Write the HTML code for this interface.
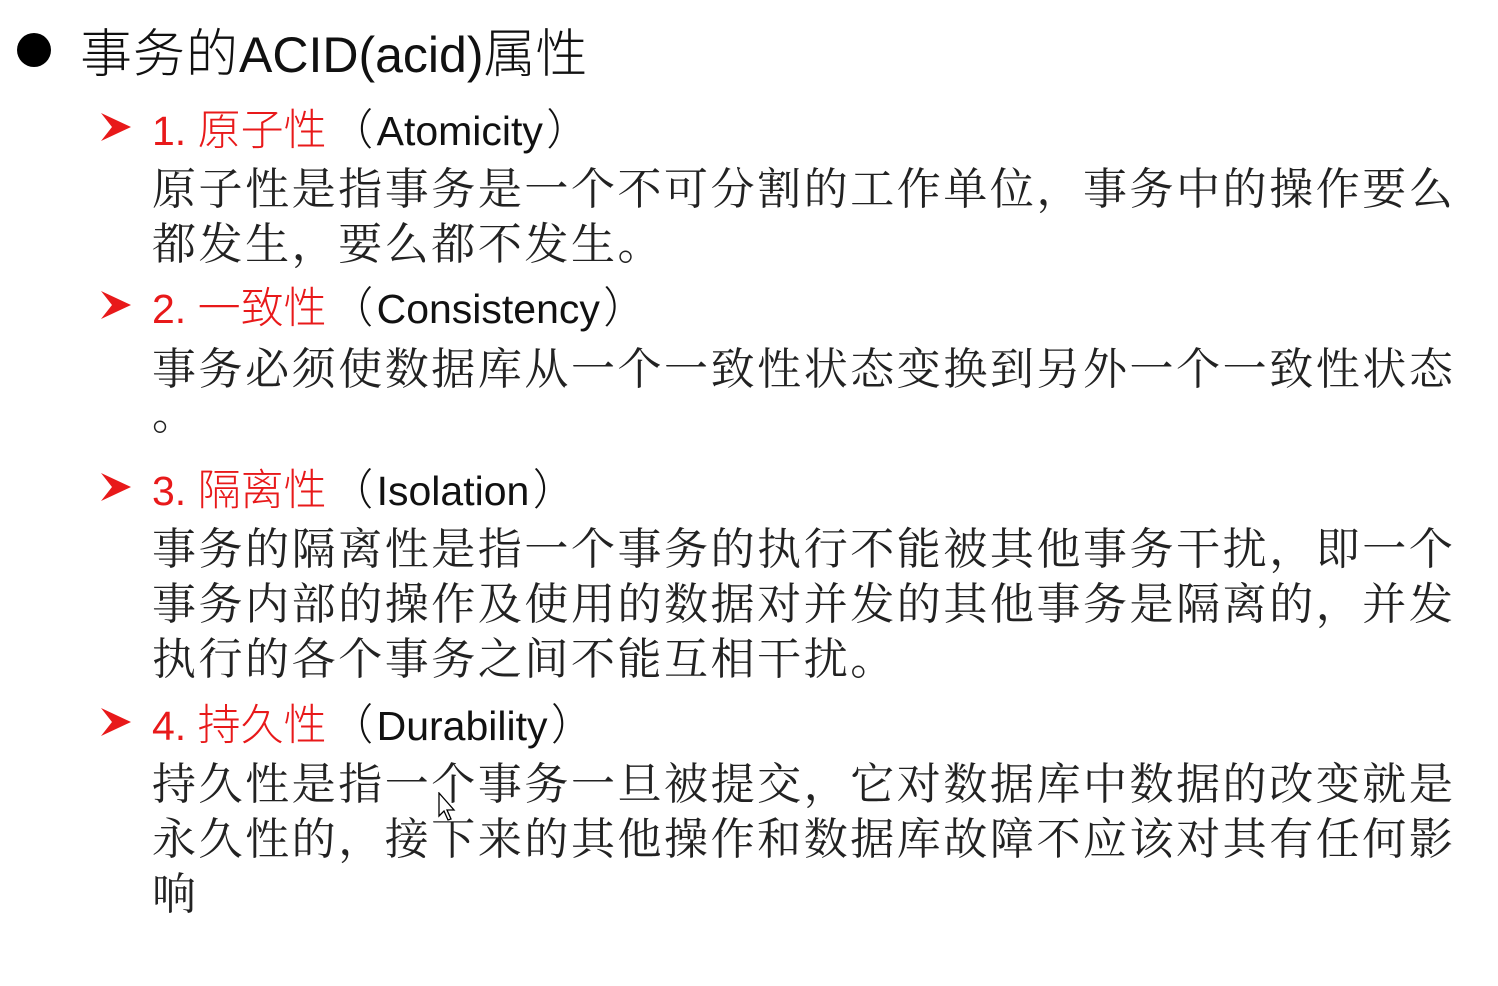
<!DOCTYPE html>
<html><head><meta charset="utf-8"><style>
body{margin:0;width:1498px;height:986px;background:#fff;position:relative;overflow:hidden}
.l{position:absolute;white-space:nowrap;line-height:56px;height:56px}
.b{left:152px;font-family:"Noto Serif CJK SC","Noto Serif CJK JP","Liberation Serif",serif;font-size:44px;letter-spacing:2.55px;color:#222}
.h{left:152px;font-family:"Liberation Sans","Noto Sans CJK SC",sans-serif;font-size:41px;color:#111}
.h .r{color:#e8191a}
.h .c{font-family:"Noto Sans CJK SC",sans-serif;font-weight:300;font-size:43px}
.h .p{font-family:"Noto Sans CJK SC",sans-serif;font-weight:300;font-size:43px;display:inline-block;width:50px;text-align:center}
.arr{position:absolute;left:100px;width:32px;height:32px}
</style></head><body>
<div style="position:absolute;left:17px;top:33px;width:34px;height:34px;border-radius:50%;background:#000"></div>
<div class="l" style="left:80px;top:20px;height:60px;line-height:60px;font-family:'Liberation Sans','Noto Sans CJK SC',sans-serif;font-size:52px;color:#111"><span style="font-family:'Noto Sans CJK SC',sans-serif;font-weight:300;letter-spacing:1px">事务的</span><span style="font-size:50px">ACID(acid)</span><span style="font-family:'Noto Sans CJK SC',sans-serif;font-weight:300">属性</span></div>

<svg class="arr" style="top:111px" viewBox="0 0 32 32"><path d="M1 2 L31 16 L1 30 L12 16 Z" fill="#e8191a"/></svg>
<div class="l h" style="top:99px"><span class="r">1. <span class="c">原子性</span></span><span class="p">（</span>Atomicity<span class="p">）</span></div>
<div class="l b" style="top:157px">原子性是指事务是一个不可分割的工作单位，事务中的操作要么</div>
<div class="l b" style="top:212px">都发生，要么都不发生。</div>

<svg class="arr" style="top:289px" viewBox="0 0 32 32"><path d="M1 2 L31 16 L1 30 L12 16 Z" fill="#e8191a"/></svg>
<div class="l h" style="top:277px"><span class="r">2. <span class="c">一致性</span></span><span class="p">（</span>Consistency<span class="p">）</span></div>
<div class="l b" style="top:337px">事务必须使数据库从一个一致性状态变换到另外一个一致性状态</div>
<div class="l b" style="top:382px">。</div>

<svg class="arr" style="top:471px" viewBox="0 0 32 32"><path d="M1 2 L31 16 L1 30 L12 16 Z" fill="#e8191a"/></svg>
<div class="l h" style="top:459px"><span class="r">3. <span class="c">隔离性</span></span><span class="p">（</span>Isolation<span class="p">）</span></div>
<div class="l b" style="top:517px">事务的隔离性是指一个事务的执行不能被其他事务干扰，即一个</div>
<div class="l b" style="top:572px">事务内部的操作及使用的数据对并发的其他事务是隔离的，并发</div>
<div class="l b" style="top:627px">执行的各个事务之间不能互相干扰。</div>

<svg class="arr" style="top:706px" viewBox="0 0 32 32"><path d="M1 2 L31 16 L1 30 L12 16 Z" fill="#e8191a"/></svg>
<div class="l h" style="top:694px"><span class="r">4. <span class="c">持久性</span></span><span class="p">（</span>Durability<span class="p">）</span></div>
<div class="l b" style="top:752px">持久性是指一个事务一旦被提交，它对数据库中数据的改变就是</div>
<div class="l b" style="top:807px">永久性的，接下来的其他操作和数据库故障不应该对其有任何影</div>
<div class="l b" style="top:862px">响</div>
<svg style="position:absolute;left:438px;top:792px" width="20" height="30" viewBox="0 0 20 30"><path d="M1 1 L1 24 L6 19 L10 28 L13 27 L9 18 L16 18 Z" fill="#fff" stroke="#000" stroke-width="1.3"/></svg>
</body></html>
